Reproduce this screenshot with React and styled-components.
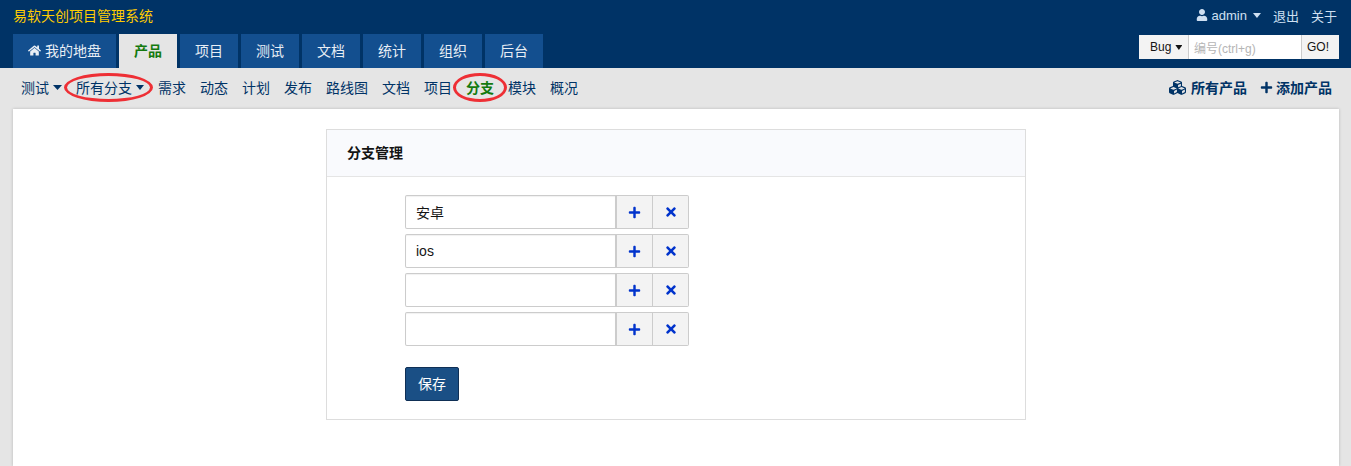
import styled, { createGlobalStyle } from "styled-components";
import { FaHome, FaUser, FaCubes, FaPlus, FaTimes } from "react-icons/fa";

const GlobalStyle = createGlobalStyle`
  html, body {
    margin: 0;
    height: 100%;
    background: #e5e5e5;
    font-family: "Liberation Sans", "Noto Sans CJK SC", sans-serif;
    font-size: 14px;
    color: #141414;
    overflow: hidden;
  }
  * { box-sizing: border-box; }
`;

const Page = styled.div`
  height: 466px;
  display: flex;
  flex-direction: column;
`;

const Header = styled.header`
  background: #003366;
  height: 68px;
  padding: 0 12px 0 13px;
  display: flex;
  flex-direction: column;
`;

const TopBar = styled.div`
  height: 34px;
  display: flex;
  justify-content: space-between;
  align-items: center;
  padding-bottom: 4px;
`;

const Brand = styled.div`
  color: #ffcc00;
  font-size: 14px;
`;

const UserLinks = styled.div`
  display: flex;
  align-items: center;
  gap: 12px;
  color: #cfe0f2;
  font-size: 13px;
  padding-right: 2px;
`;

const UserName = styled.span`
  display: inline-flex;
  align-items: center;
  gap: 4px;
`;

const Caret = styled.i`
  display: inline-block;
  width: ${({ $width }) => $width ?? 9}px;
  height: 5px;
  margin-left: ${({ $gap }) => $gap ?? 4}px;
  margin-top: 1px;
  background: currentColor;
  clip-path: polygon(0 0, 100% 0, 50% 100%);
`;

const TabRow = styled.div`
  display: flex;
  justify-content: space-between;
  height: 34px;
`;

const Tabs = styled.nav`
  display: flex;
  gap: 3px;
`;

const Tab = styled.div`
  width: ${({ $wide }) => ($wide ? "103px" : "58px")};
  display: flex;
  align-items: center;
  justify-content: center;
  gap: 4px;
  padding-bottom: 2px;
  background: ${({ $active }) => ($active ? "#e5e5e5" : "#134f8f")};
  color: ${({ $active }) => ($active ? "#147a0f" : "#e8eef5")};
  font-weight: ${({ $active }) => ($active ? "bold" : "normal")};
`;

const Search = styled.div`
  display: flex;
  height: 24px;
  margin-top: 1px;
  width: 200px;
  background: #fff;
  font-size: 12px;
`;

const SearchType = styled.div`
  width: 50px;
  display: flex;
  align-items: center;
  padding-left: 11px;
  background: #f3f3f3;
  border-right: 1px solid #ccc;
  color: #141414;
`;

const SearchInput = styled.div`
  flex: 1;
  display: flex;
  align-items: center;
  padding-left: 5px;
  color: #b5b5b5;
`;

const SearchGo = styled.div`
  width: 38px;
  display: flex;
  align-items: center;
  padding-left: 5px;
  background: #f3f3f3;
  border-left: 1px solid #ccc;
  color: #141414;
`;

const SubNav = styled.div`
  height: 41px;
  display: flex;
  justify-content: space-between;
  align-items: center;
  padding: 0 19px 3px 21px;
  color: #003366;
`;

const SubLinks = styled.div`
  display: flex;
  align-items: center;
  gap: 14px;
`;

const SubLink = styled.span`
  position: relative;
  display: inline-flex;
  align-items: center;
  color: ${({ $active }) => ($active ? "#147a0f" : "#003366")};
  font-weight: ${({ $active }) => ($active ? "bold" : "normal")};
`;

const Ellipse = styled.span`
  position: absolute;
  top: -4px;
  bottom: -5px;
  left: ${({ $left }) => $left}px;
  right: ${({ $right }) => $right}px;
  border: 3px solid #ee2f35;
  border-radius: 50%;
`;

const Actions = styled.div`
  display: flex;
  align-items: center;
  gap: 13px;
  font-weight: bold;
`;

const Action = styled.span`
  display: inline-flex;
  align-items: center;
  gap: ${({ $gap }) => $gap}px;
`;

const Content = styled.main`
  flex: 1;
  margin: 0 12px 0 13px;
  padding-top: 20px;
  background: #fff;
  box-shadow: 0 0 3px rgba(0, 0, 0, 0.2);
  display: flex;
  justify-content: center;
`;

const Panel = styled.section`
  width: 700px;
  height: 291px;
  border: 1px solid #ddd;
`;

const PanelHead = styled.div`
  height: 47px;
  display: flex;
  align-items: center;
  padding: 0 0 3px 20px;
  background: #f9fafd;
  border-bottom: 1px solid #e5e5e5;
  font-weight: bold;
`;

const PanelBody = styled.div`
  padding: 18px 0 0 78px;
  display: flex;
  flex-direction: column;
  align-items: flex-start;
`;

const Rows = styled.div`
  display: flex;
  flex-direction: column;
  gap: 5px;
  margin-bottom: 21px;
`;

const Row = styled.div`
  display: flex;
  height: 34px;
`;

const Field = styled.div`
  width: 212px;
  display: flex;
  align-items: center;
  padding: 0 0 1px 10px;
  background: #fff;
  border: 1px solid #ccc;
  border-right-width: 2px;
  border-radius: 2px 0 0 2px;
  box-shadow: inset 0 1px 1px rgba(0, 0, 0, 0.06);
`;

const Addon = styled.div`
  width: 36px;
  display: flex;
  align-items: center;
  justify-content: center;
  background: #f3f3f3;
  border: 1px solid #ccc;
  border-left: 0;
  color: #0033cc;
  &:last-child { border-radius: 0 2px 2px 0; }
`;

const SaveButton = styled.button`
  width: 54px;
  height: 34px;
  padding: 0 0 2px;
  background: #1a4f85;
  border: 1px solid #0f2f55;
  border-radius: 2px;
  color: #fff;
  font: inherit;
`;

const subItems = ["需求", "动态", "计划", "发布", "路线图", "文档", "项目"];
const tabItems = ["项目", "测试", "文档", "统计", "组织", "后台"];
const branches = ["安卓", "ios", "", ""];

export default function App() {
  return (
    <Page>
      <GlobalStyle />
      <Header>
        <TopBar>
          <Brand>易软天创项目管理系统</Brand>
          <UserLinks>
            <UserName><FaUser size={12} />admin<Caret $gap={2} $width={8} /></UserName>
            <span>退出</span>
            <span>关于</span>
          </UserLinks>
        </TopBar>
        <TabRow>
          <Tabs>
            <Tab $wide><FaHome size={13} />我的地盘</Tab>
            <Tab $active>产品</Tab>
            {tabItems.map((t) => <Tab key={t}>{t}</Tab>)}
          </Tabs>
          <Search>
            <SearchType>Bug<Caret $gap={4} $width={7} /></SearchType>
            <SearchInput>编号(ctrl+g)</SearchInput>
            <SearchGo>GO!</SearchGo>
          </Search>
        </TabRow>
      </Header>
      <SubNav>
        <SubLinks>
          <SubLink>测试<Caret /></SubLink>
          <SubLink>所有分支<Caret $width={8} /><Ellipse $left={-12} $right={-9} /></SubLink>
          {subItems.map((s) => <SubLink key={s}>{s}</SubLink>)}
          <SubLink $active>分支<Ellipse $left={-13} $right={-13} /></SubLink>
          <SubLink>模块</SubLink>
          <SubLink>概况</SubLink>
        </SubLinks>
        <Actions>
          <Action $gap={5}><FaCubes size={17} />所有产品</Action>
          <Action $gap={3}><FaPlus size={13} />添加产品</Action>
        </Actions>
      </SubNav>
      <Content>
        <Panel>
          <PanelHead>分支管理</PanelHead>
          <PanelBody>
            <Rows>
              {branches.map((b, i) => (
                <Row key={i}>
                  <Field>{b}</Field>
                  <Addon><FaPlus size={13} /></Addon>
                  <Addon><FaTimes size={14} /></Addon>
                </Row>
              ))}
            </Rows>
            <SaveButton>保存</SaveButton>
          </PanelBody>
        </Panel>
      </Content>
    </Page>
  );
}
